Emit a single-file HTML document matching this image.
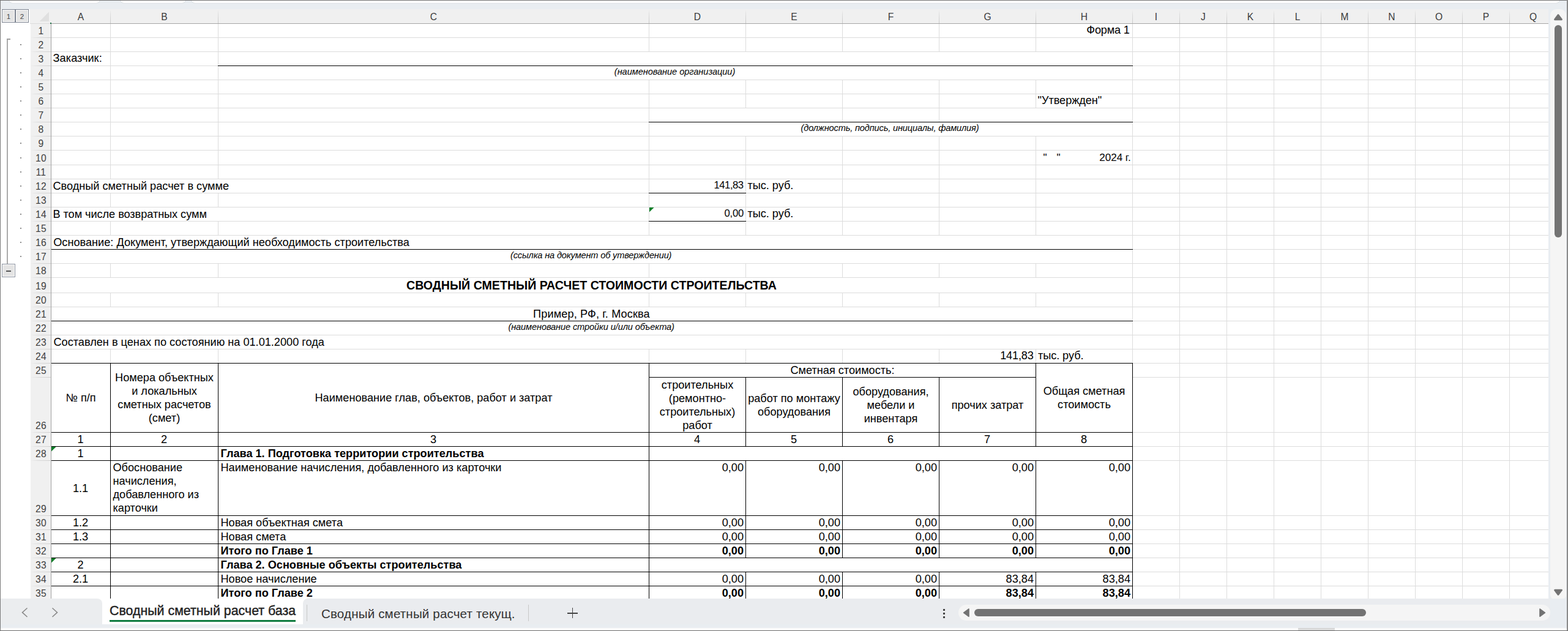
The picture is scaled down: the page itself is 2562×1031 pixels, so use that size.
<!DOCTYPE html>
<html lang="ru"><head><meta charset="utf-8"><title>Сводный сметный расчет</title>
<style>
html,body{margin:0;padding:0}
body{width:2562px;height:1031px;overflow:hidden;position:relative;background:#e9edf1;font-family:"Liberation Sans",sans-serif}
#app{position:absolute;left:0;top:0;width:2562px;height:1031px;overflow:hidden}
#app div,#app svg{position:absolute}
.t{white-space:nowrap}
.h{font-family:"Liberation Sans",sans-serif}
</style></head>
<body><div id="app">
<div style="left:0px;top:0px;width:2562px;height:15px;background:#e9edf1;"></div>
<div style="left:15px;top:-2px;width:148px;height:6.5px;background:#ffffff;border-radius:0 0 6px 6px;box-shadow:0 0 0 1px #dde1e5;"></div>
<div style="left:197px;top:-2px;width:106px;height:6.5px;background:#ffffff;border-radius:0 0 6px 6px;box-shadow:0 0 0 1px #dde1e5;"></div>
<div style="left:313px;top:-2px;width:2235px;height:6.5px;background:#ffffff;border-radius:0 0 6px 6px;box-shadow:0 0 0 1px #dde1e5;"></div>
<div style="left:1px;top:15px;width:2529px;height:963px;background:#ffffff;"></div>
<div style="left:49px;top:15px;width:2481px;height:23px;background:#f0f0f0;"></div>
<div style="left:50px;top:39px;width:33px;height:939px;background:#f0f0f0;"></div>
<svg style="left:64px;top:19px" width="17" height="17"><polygon points="16,0.3 16,16 0.6,16" fill="#e0e0e0"/></svg>
<div style="left:180px;top:39px;width:1px;height:939px;background:#dcdcdc;"></div>
<div style="left:180px;top:16px;width:1px;height:22px;background:linear-gradient(to bottom,#f0f0f0,#dcdcdc 35%,#c8c8c8);"></div>
<div style="left:356px;top:39px;width:1px;height:939px;background:#dcdcdc;"></div>
<div style="left:356px;top:16px;width:1px;height:22px;background:linear-gradient(to bottom,#f0f0f0,#dcdcdc 35%,#c8c8c8);"></div>
<div style="left:1060px;top:39px;width:1px;height:939px;background:#dcdcdc;"></div>
<div style="left:1060px;top:16px;width:1px;height:22px;background:linear-gradient(to bottom,#f0f0f0,#dcdcdc 35%,#c8c8c8);"></div>
<div style="left:1218px;top:39px;width:1px;height:939px;background:#dcdcdc;"></div>
<div style="left:1218px;top:16px;width:1px;height:22px;background:linear-gradient(to bottom,#f0f0f0,#dcdcdc 35%,#c8c8c8);"></div>
<div style="left:1376px;top:39px;width:1px;height:939px;background:#dcdcdc;"></div>
<div style="left:1376px;top:16px;width:1px;height:22px;background:linear-gradient(to bottom,#f0f0f0,#dcdcdc 35%,#c8c8c8);"></div>
<div style="left:1534px;top:39px;width:1px;height:939px;background:#dcdcdc;"></div>
<div style="left:1534px;top:16px;width:1px;height:22px;background:linear-gradient(to bottom,#f0f0f0,#dcdcdc 35%,#c8c8c8);"></div>
<div style="left:1692px;top:39px;width:1px;height:939px;background:#dcdcdc;"></div>
<div style="left:1692px;top:16px;width:1px;height:22px;background:linear-gradient(to bottom,#f0f0f0,#dcdcdc 35%,#c8c8c8);"></div>
<div style="left:1850px;top:39px;width:1px;height:939px;background:#dcdcdc;"></div>
<div style="left:1850px;top:16px;width:1px;height:22px;background:linear-gradient(to bottom,#f0f0f0,#dcdcdc 35%,#c8c8c8);"></div>
<div style="left:1927px;top:39px;width:1px;height:939px;background:#dcdcdc;"></div>
<div style="left:1927px;top:16px;width:1px;height:22px;background:linear-gradient(to bottom,#f0f0f0,#dcdcdc 35%,#c8c8c8);"></div>
<div style="left:2004px;top:39px;width:1px;height:939px;background:#dcdcdc;"></div>
<div style="left:2004px;top:16px;width:1px;height:22px;background:linear-gradient(to bottom,#f0f0f0,#dcdcdc 35%,#c8c8c8);"></div>
<div style="left:2081px;top:39px;width:1px;height:939px;background:#dcdcdc;"></div>
<div style="left:2081px;top:16px;width:1px;height:22px;background:linear-gradient(to bottom,#f0f0f0,#dcdcdc 35%,#c8c8c8);"></div>
<div style="left:2158px;top:39px;width:1px;height:939px;background:#dcdcdc;"></div>
<div style="left:2158px;top:16px;width:1px;height:22px;background:linear-gradient(to bottom,#f0f0f0,#dcdcdc 35%,#c8c8c8);"></div>
<div style="left:2235px;top:39px;width:1px;height:939px;background:#dcdcdc;"></div>
<div style="left:2235px;top:16px;width:1px;height:22px;background:linear-gradient(to bottom,#f0f0f0,#dcdcdc 35%,#c8c8c8);"></div>
<div style="left:2312px;top:39px;width:1px;height:939px;background:#dcdcdc;"></div>
<div style="left:2312px;top:16px;width:1px;height:22px;background:linear-gradient(to bottom,#f0f0f0,#dcdcdc 35%,#c8c8c8);"></div>
<div style="left:2389px;top:39px;width:1px;height:939px;background:#dcdcdc;"></div>
<div style="left:2389px;top:16px;width:1px;height:22px;background:linear-gradient(to bottom,#f0f0f0,#dcdcdc 35%,#c8c8c8);"></div>
<div style="left:2466px;top:39px;width:1px;height:939px;background:#dcdcdc;"></div>
<div style="left:2466px;top:16px;width:1px;height:22px;background:linear-gradient(to bottom,#f0f0f0,#dcdcdc 35%,#c8c8c8);"></div>
<div style="left:84px;top:61px;width:2446px;height:1px;background:#dcdcdc;"></div>
<div style="left:50px;top:61px;width:33px;height:1px;background:linear-gradient(to right,#f0f0f0,#dadada 40%,#cfcfcf);"></div>
<div style="left:84px;top:84px;width:2446px;height:1px;background:#dcdcdc;"></div>
<div style="left:50px;top:84px;width:33px;height:1px;background:linear-gradient(to right,#f0f0f0,#dadada 40%,#cfcfcf);"></div>
<div style="left:84px;top:107px;width:2446px;height:1px;background:#dcdcdc;"></div>
<div style="left:50px;top:107px;width:33px;height:1px;background:linear-gradient(to right,#f0f0f0,#dadada 40%,#cfcfcf);"></div>
<div style="left:84px;top:130px;width:2446px;height:1px;background:#dcdcdc;"></div>
<div style="left:50px;top:130px;width:33px;height:1px;background:linear-gradient(to right,#f0f0f0,#dadada 40%,#cfcfcf);"></div>
<div style="left:84px;top:153px;width:2446px;height:1px;background:#dcdcdc;"></div>
<div style="left:50px;top:153px;width:33px;height:1px;background:linear-gradient(to right,#f0f0f0,#dadada 40%,#cfcfcf);"></div>
<div style="left:84px;top:176px;width:2446px;height:1px;background:#dcdcdc;"></div>
<div style="left:50px;top:176px;width:33px;height:1px;background:linear-gradient(to right,#f0f0f0,#dadada 40%,#cfcfcf);"></div>
<div style="left:84px;top:199px;width:2446px;height:1px;background:#dcdcdc;"></div>
<div style="left:50px;top:199px;width:33px;height:1px;background:linear-gradient(to right,#f0f0f0,#dadada 40%,#cfcfcf);"></div>
<div style="left:84px;top:222px;width:2446px;height:1px;background:#dcdcdc;"></div>
<div style="left:50px;top:222px;width:33px;height:1px;background:linear-gradient(to right,#f0f0f0,#dadada 40%,#cfcfcf);"></div>
<div style="left:84px;top:245px;width:2446px;height:1px;background:#dcdcdc;"></div>
<div style="left:50px;top:245px;width:33px;height:1px;background:linear-gradient(to right,#f0f0f0,#dadada 40%,#cfcfcf);"></div>
<div style="left:84px;top:269px;width:2446px;height:1px;background:#dcdcdc;"></div>
<div style="left:50px;top:269px;width:33px;height:1px;background:linear-gradient(to right,#f0f0f0,#dadada 40%,#cfcfcf);"></div>
<div style="left:84px;top:292px;width:2446px;height:1px;background:#dcdcdc;"></div>
<div style="left:50px;top:292px;width:33px;height:1px;background:linear-gradient(to right,#f0f0f0,#dadada 40%,#cfcfcf);"></div>
<div style="left:84px;top:315px;width:2446px;height:1px;background:#dcdcdc;"></div>
<div style="left:50px;top:315px;width:33px;height:1px;background:linear-gradient(to right,#f0f0f0,#dadada 40%,#cfcfcf);"></div>
<div style="left:84px;top:338px;width:2446px;height:1px;background:#dcdcdc;"></div>
<div style="left:50px;top:338px;width:33px;height:1px;background:linear-gradient(to right,#f0f0f0,#dadada 40%,#cfcfcf);"></div>
<div style="left:84px;top:361px;width:2446px;height:1px;background:#dcdcdc;"></div>
<div style="left:50px;top:361px;width:33px;height:1px;background:linear-gradient(to right,#f0f0f0,#dadada 40%,#cfcfcf);"></div>
<div style="left:84px;top:384px;width:2446px;height:1px;background:#dcdcdc;"></div>
<div style="left:50px;top:384px;width:33px;height:1px;background:linear-gradient(to right,#f0f0f0,#dadada 40%,#cfcfcf);"></div>
<div style="left:84px;top:407px;width:2446px;height:1px;background:#dcdcdc;"></div>
<div style="left:50px;top:407px;width:33px;height:1px;background:linear-gradient(to right,#f0f0f0,#dadada 40%,#cfcfcf);"></div>
<div style="left:84px;top:430px;width:2446px;height:1px;background:#dcdcdc;"></div>
<div style="left:50px;top:430px;width:33px;height:1px;background:linear-gradient(to right,#f0f0f0,#dadada 40%,#cfcfcf);"></div>
<div style="left:84px;top:453px;width:2446px;height:1px;background:#dcdcdc;"></div>
<div style="left:50px;top:453px;width:33px;height:1px;background:linear-gradient(to right,#f0f0f0,#dadada 40%,#cfcfcf);"></div>
<div style="left:84px;top:478px;width:2446px;height:1px;background:#dcdcdc;"></div>
<div style="left:50px;top:478px;width:33px;height:1px;background:linear-gradient(to right,#f0f0f0,#dadada 40%,#cfcfcf);"></div>
<div style="left:84px;top:501px;width:2446px;height:1px;background:#dcdcdc;"></div>
<div style="left:50px;top:501px;width:33px;height:1px;background:linear-gradient(to right,#f0f0f0,#dadada 40%,#cfcfcf);"></div>
<div style="left:84px;top:524px;width:2446px;height:1px;background:#dcdcdc;"></div>
<div style="left:50px;top:524px;width:33px;height:1px;background:linear-gradient(to right,#f0f0f0,#dadada 40%,#cfcfcf);"></div>
<div style="left:84px;top:547px;width:2446px;height:1px;background:#dcdcdc;"></div>
<div style="left:50px;top:547px;width:33px;height:1px;background:linear-gradient(to right,#f0f0f0,#dadada 40%,#cfcfcf);"></div>
<div style="left:84px;top:570px;width:2446px;height:1px;background:#dcdcdc;"></div>
<div style="left:50px;top:570px;width:33px;height:1px;background:linear-gradient(to right,#f0f0f0,#dadada 40%,#cfcfcf);"></div>
<div style="left:84px;top:593px;width:2446px;height:1px;background:#dcdcdc;"></div>
<div style="left:50px;top:593px;width:33px;height:1px;background:linear-gradient(to right,#f0f0f0,#dadada 40%,#cfcfcf);"></div>
<div style="left:84px;top:616px;width:2446px;height:1px;background:#dcdcdc;"></div>
<div style="left:50px;top:616px;width:33px;height:1px;background:linear-gradient(to right,#f0f0f0,#dadada 40%,#cfcfcf);"></div>
<div style="left:84px;top:706px;width:2446px;height:1px;background:#dcdcdc;"></div>
<div style="left:50px;top:706px;width:33px;height:1px;background:linear-gradient(to right,#f0f0f0,#dadada 40%,#cfcfcf);"></div>
<div style="left:84px;top:729px;width:2446px;height:1px;background:#dcdcdc;"></div>
<div style="left:50px;top:729px;width:33px;height:1px;background:linear-gradient(to right,#f0f0f0,#dadada 40%,#cfcfcf);"></div>
<div style="left:84px;top:752px;width:2446px;height:1px;background:#dcdcdc;"></div>
<div style="left:50px;top:752px;width:33px;height:1px;background:linear-gradient(to right,#f0f0f0,#dadada 40%,#cfcfcf);"></div>
<div style="left:84px;top:842px;width:2446px;height:1px;background:#dcdcdc;"></div>
<div style="left:50px;top:842px;width:33px;height:1px;background:linear-gradient(to right,#f0f0f0,#dadada 40%,#cfcfcf);"></div>
<div style="left:84px;top:865px;width:2446px;height:1px;background:#dcdcdc;"></div>
<div style="left:50px;top:865px;width:33px;height:1px;background:linear-gradient(to right,#f0f0f0,#dadada 40%,#cfcfcf);"></div>
<div style="left:84px;top:888px;width:2446px;height:1px;background:#dcdcdc;"></div>
<div style="left:50px;top:888px;width:33px;height:1px;background:linear-gradient(to right,#f0f0f0,#dadada 40%,#cfcfcf);"></div>
<div style="left:84px;top:911px;width:2446px;height:1px;background:#dcdcdc;"></div>
<div style="left:50px;top:911px;width:33px;height:1px;background:linear-gradient(to right,#f0f0f0,#dadada 40%,#cfcfcf);"></div>
<div style="left:84px;top:934px;width:2446px;height:1px;background:#dcdcdc;"></div>
<div style="left:50px;top:934px;width:33px;height:1px;background:linear-gradient(to right,#f0f0f0,#dadada 40%,#cfcfcf);"></div>
<div style="left:84px;top:957px;width:2446px;height:1px;background:#dcdcdc;"></div>
<div style="left:50px;top:957px;width:33px;height:1px;background:linear-gradient(to right,#f0f0f0,#dadada 40%,#cfcfcf);"></div>
<div style="left:357px;top:85px;width:1493px;height:22px;background:#ffffff;"></div>
<div style="left:357px;top:108px;width:1493px;height:22px;background:#ffffff;"></div>
<div style="left:1061px;top:177px;width:315px;height:22px;background:#ffffff;"></div>
<div style="left:1535px;top:177px;width:315px;height:22px;background:#ffffff;"></div>
<div style="left:1061px;top:200px;width:789px;height:22px;background:#ffffff;"></div>
<div style="left:84px;top:293px;width:976px;height:22px;background:#ffffff;"></div>
<div style="left:84px;top:339px;width:976px;height:22px;background:#ffffff;"></div>
<div style="left:84px;top:385px;width:1766px;height:22px;background:#ffffff;"></div>
<div style="left:84px;top:408px;width:1766px;height:22px;background:#ffffff;"></div>
<div style="left:84px;top:454px;width:1766px;height:24px;background:#ffffff;"></div>
<div style="left:84px;top:502px;width:1766px;height:22px;background:#ffffff;"></div>
<div style="left:84px;top:525px;width:1766px;height:22px;background:#ffffff;"></div>
<div style="left:84px;top:548px;width:1766px;height:22px;background:#ffffff;"></div>
<div style="left:84px;top:594px;width:96px;height:112px;background:#ffffff;"></div>
<div style="left:181px;top:594px;width:175px;height:112px;background:#ffffff;"></div>
<div style="left:357px;top:594px;width:703px;height:112px;background:#ffffff;"></div>
<div style="left:1061px;top:594px;width:631px;height:22px;background:#ffffff;"></div>
<div style="left:1693px;top:594px;width:157px;height:112px;background:#ffffff;"></div>
<div style="left:1061px;top:730px;width:789px;height:22px;background:#ffffff;"></div>
<div style="left:1061px;top:912px;width:789px;height:22px;background:#ffffff;"></div>
<div style="left:356px;top:107px;width:1495px;height:1px;background:#000000;"></div>
<div style="left:1060px;top:199px;width:791px;height:1px;background:#000000;"></div>
<div style="left:1060px;top:315px;width:159px;height:1px;background:#000000;"></div>
<div style="left:1060px;top:361px;width:159px;height:1px;background:#000000;"></div>
<div style="left:84px;top:407px;width:1767px;height:1px;background:#000000;"></div>
<div style="left:84px;top:524px;width:1767px;height:1px;background:#000000;"></div>
<div style="left:84px;top:593px;width:1767px;height:1px;background:#000000;"></div>
<div style="left:84px;top:706px;width:1767px;height:1px;background:#000000;"></div>
<div style="left:84px;top:729px;width:1767px;height:1px;background:#000000;"></div>
<div style="left:84px;top:752px;width:1767px;height:1px;background:#000000;"></div>
<div style="left:84px;top:842px;width:1767px;height:1px;background:#000000;"></div>
<div style="left:84px;top:865px;width:1767px;height:1px;background:#000000;"></div>
<div style="left:84px;top:888px;width:1767px;height:1px;background:#000000;"></div>
<div style="left:84px;top:911px;width:1767px;height:1px;background:#000000;"></div>
<div style="left:84px;top:934px;width:1767px;height:1px;background:#000000;"></div>
<div style="left:84px;top:957px;width:1767px;height:1px;background:#000000;"></div>
<div style="left:1060px;top:616px;width:633px;height:1px;background:#000000;"></div>
<div style="left:180px;top:593px;width:1px;height:385px;background:#000000;"></div>
<div style="left:356px;top:593px;width:1px;height:385px;background:#000000;"></div>
<div style="left:1060px;top:593px;width:1px;height:385px;background:#000000;"></div>
<div style="left:1850px;top:593px;width:1px;height:385px;background:#000000;"></div>
<div style="left:1218px;top:616px;width:1px;height:114px;background:#000000;"></div>
<div style="left:1218px;top:752px;width:1px;height:160px;background:#000000;"></div>
<div style="left:1218px;top:934px;width:1px;height:44px;background:#000000;"></div>
<div style="left:1376px;top:616px;width:1px;height:114px;background:#000000;"></div>
<div style="left:1376px;top:752px;width:1px;height:160px;background:#000000;"></div>
<div style="left:1376px;top:934px;width:1px;height:44px;background:#000000;"></div>
<div style="left:1534px;top:616px;width:1px;height:114px;background:#000000;"></div>
<div style="left:1534px;top:752px;width:1px;height:160px;background:#000000;"></div>
<div style="left:1534px;top:934px;width:1px;height:44px;background:#000000;"></div>
<div style="left:1692px;top:593px;width:1px;height:137px;background:#000000;"></div>
<div style="left:1692px;top:752px;width:1px;height:160px;background:#000000;"></div>
<div style="left:1692px;top:934px;width:1px;height:44px;background:#000000;"></div>
<div style="left:49px;top:38px;width:35px;height:1px;background:#dcdcdc;"></div>
<div style="left:84px;top:38px;width:2446px;height:1px;background:#a6a6a6;"></div>
<div style="left:50px;top:978px;width:2481px;height:1px;background:#d9d9d9;"></div>
<div style="left:2530px;top:15px;width:1px;height:964px;background:#dfe2e5;"></div>
<div style="left:83px;top:38px;width:1px;height:940px;background:#a0a0a0;"></div>
<div style="left:82px;top:37px;width:2px;height:2px;background:#1e7145;"></div>
<svg style="left:1061px;top:339px" width="9" height="9"><polygon points="0,0 7.6,0 0,7.6" fill="#10802a"/></svg>
<svg style="left:84px;top:730px" width="9" height="9"><polygon points="0,0 7.6,0 0,7.6" fill="#10802a"/></svg>
<svg style="left:84px;top:912px" width="9" height="9"><polygon points="0,0 7.6,0 0,7.6" fill="#10802a"/></svg>
<div class="t h" id="t0" style="top:16.59px;font-size:15.6px;line-height:22px;color:#3b3b3b;left:-468.0px;width:1200px;text-align:center;">A</div>
<div class="t h" id="t1" style="top:16.59px;font-size:15.6px;line-height:22px;color:#3b3b3b;left:-331.5px;width:1200px;text-align:center;">B</div>
<div class="t h" id="t2" style="top:16.59px;font-size:15.6px;line-height:22px;color:#3b3b3b;left:108.5px;width:1200px;text-align:center;">C</div>
<div class="t h" id="t3" style="top:16.59px;font-size:15.6px;line-height:22px;color:#3b3b3b;left:539.5px;width:1200px;text-align:center;">D</div>
<div class="t h" id="t4" style="top:16.59px;font-size:15.6px;line-height:22px;color:#3b3b3b;left:697.5px;width:1200px;text-align:center;">E</div>
<div class="t h" id="t5" style="top:16.59px;font-size:15.6px;line-height:22px;color:#3b3b3b;left:855.5px;width:1200px;text-align:center;">F</div>
<div class="t h" id="t6" style="top:16.59px;font-size:15.6px;line-height:22px;color:#3b3b3b;left:1013.5px;width:1200px;text-align:center;">G</div>
<div class="t h" id="t7" style="top:16.59px;font-size:15.6px;line-height:22px;color:#3b3b3b;left:1171.5px;width:1200px;text-align:center;">H</div>
<div class="t h" id="t8" style="top:16.59px;font-size:15.6px;line-height:22px;color:#3b3b3b;left:1289.0px;width:1200px;text-align:center;">I</div>
<div class="t h" id="t9" style="top:16.59px;font-size:15.6px;line-height:22px;color:#3b3b3b;left:1366.0px;width:1200px;text-align:center;">J</div>
<div class="t h" id="t10" style="top:16.59px;font-size:15.6px;line-height:22px;color:#3b3b3b;left:1443.0px;width:1200px;text-align:center;">K</div>
<div class="t h" id="t11" style="top:16.59px;font-size:15.6px;line-height:22px;color:#3b3b3b;left:1520.0px;width:1200px;text-align:center;">L</div>
<div class="t h" id="t12" style="top:16.59px;font-size:15.6px;line-height:22px;color:#3b3b3b;left:1597.0px;width:1200px;text-align:center;">M</div>
<div class="t h" id="t13" style="top:16.59px;font-size:15.6px;line-height:22px;color:#3b3b3b;left:1674.0px;width:1200px;text-align:center;">N</div>
<div class="t h" id="t14" style="top:16.59px;font-size:15.6px;line-height:22px;color:#3b3b3b;left:1751.0px;width:1200px;text-align:center;">O</div>
<div class="t h" id="t15" style="top:16.59px;font-size:15.6px;line-height:22px;color:#3b3b3b;left:1828.0px;width:1200px;text-align:center;">P</div>
<div class="t h" id="t16" style="top:16.59px;font-size:15.6px;line-height:22px;color:#3b3b3b;left:1905.0px;width:1200px;text-align:center;">Q</div>
<div class="t h" id="t17" style="top:39.59px;font-size:15.6px;line-height:22px;color:#404040;left:-533.2px;width:1200px;text-align:center;letter-spacing:0.2px;text-indent:0.2px;">1</div>
<div class="t h" id="t18" style="top:62.59px;font-size:15.6px;line-height:22px;color:#404040;left:-533.2px;width:1200px;text-align:center;letter-spacing:0.2px;text-indent:0.2px;">2</div>
<div class="t h" id="t19" style="top:85.59px;font-size:15.6px;line-height:22px;color:#404040;left:-533.2px;width:1200px;text-align:center;letter-spacing:0.2px;text-indent:0.2px;">3</div>
<div class="t h" id="t20" style="top:108.59px;font-size:15.6px;line-height:22px;color:#404040;left:-533.2px;width:1200px;text-align:center;letter-spacing:0.2px;text-indent:0.2px;">4</div>
<div class="t h" id="t21" style="top:131.59px;font-size:15.6px;line-height:22px;color:#404040;left:-533.2px;width:1200px;text-align:center;letter-spacing:0.2px;text-indent:0.2px;">5</div>
<div class="t h" id="t22" style="top:154.59px;font-size:15.6px;line-height:22px;color:#404040;left:-533.2px;width:1200px;text-align:center;letter-spacing:0.2px;text-indent:0.2px;">6</div>
<div class="t h" id="t23" style="top:177.59px;font-size:15.6px;line-height:22px;color:#404040;left:-533.2px;width:1200px;text-align:center;letter-spacing:0.2px;text-indent:0.2px;">7</div>
<div class="t h" id="t24" style="top:200.59px;font-size:15.6px;line-height:22px;color:#404040;left:-533.2px;width:1200px;text-align:center;letter-spacing:0.2px;text-indent:0.2px;">8</div>
<div class="t h" id="t25" style="top:223.59px;font-size:15.6px;line-height:22px;color:#404040;left:-533.2px;width:1200px;text-align:center;letter-spacing:0.2px;text-indent:0.2px;">9</div>
<div class="t h" id="t26" style="top:247.59px;font-size:15.6px;line-height:22px;color:#404040;left:-533.2px;width:1200px;text-align:center;letter-spacing:0.2px;text-indent:0.2px;">10</div>
<div class="t h" id="t27" style="top:270.59px;font-size:15.6px;line-height:22px;color:#404040;left:-533.2px;width:1200px;text-align:center;letter-spacing:0.2px;text-indent:0.2px;">11</div>
<div class="t h" id="t28" style="top:293.59px;font-size:15.6px;line-height:22px;color:#404040;left:-533.2px;width:1200px;text-align:center;letter-spacing:0.2px;text-indent:0.2px;">12</div>
<div class="t h" id="t29" style="top:316.59px;font-size:15.6px;line-height:22px;color:#404040;left:-533.2px;width:1200px;text-align:center;letter-spacing:0.2px;text-indent:0.2px;">13</div>
<div class="t h" id="t30" style="top:339.59px;font-size:15.6px;line-height:22px;color:#404040;left:-533.2px;width:1200px;text-align:center;letter-spacing:0.2px;text-indent:0.2px;">14</div>
<div class="t h" id="t31" style="top:362.59px;font-size:15.6px;line-height:22px;color:#404040;left:-533.2px;width:1200px;text-align:center;letter-spacing:0.2px;text-indent:0.2px;">15</div>
<div class="t h" id="t32" style="top:385.59px;font-size:15.6px;line-height:22px;color:#404040;left:-533.2px;width:1200px;text-align:center;letter-spacing:0.2px;text-indent:0.2px;">16</div>
<div class="t h" id="t33" style="top:408.59px;font-size:15.6px;line-height:22px;color:#404040;left:-533.2px;width:1200px;text-align:center;letter-spacing:0.2px;text-indent:0.2px;">17</div>
<div class="t h" id="t34" style="top:431.59px;font-size:15.6px;line-height:22px;color:#404040;left:-533.2px;width:1200px;text-align:center;letter-spacing:0.2px;text-indent:0.2px;">18</div>
<div class="t h" id="t35" style="top:456.59px;font-size:15.6px;line-height:22px;color:#404040;left:-533.2px;width:1200px;text-align:center;letter-spacing:0.2px;text-indent:0.2px;">19</div>
<div class="t h" id="t36" style="top:479.59px;font-size:15.6px;line-height:22px;color:#404040;left:-533.2px;width:1200px;text-align:center;letter-spacing:0.2px;text-indent:0.2px;">20</div>
<div class="t h" id="t37" style="top:502.59px;font-size:15.6px;line-height:22px;color:#404040;left:-533.2px;width:1200px;text-align:center;letter-spacing:0.2px;text-indent:0.2px;">21</div>
<div class="t h" id="t38" style="top:525.59px;font-size:15.6px;line-height:22px;color:#404040;left:-533.2px;width:1200px;text-align:center;letter-spacing:0.2px;text-indent:0.2px;">22</div>
<div class="t h" id="t39" style="top:548.59px;font-size:15.6px;line-height:22px;color:#404040;left:-533.2px;width:1200px;text-align:center;letter-spacing:0.2px;text-indent:0.2px;">23</div>
<div class="t h" id="t40" style="top:571.59px;font-size:15.6px;line-height:22px;color:#404040;left:-533.2px;width:1200px;text-align:center;letter-spacing:0.2px;text-indent:0.2px;">24</div>
<div class="t h" id="t41" style="top:594.59px;font-size:15.6px;line-height:22px;color:#404040;left:-533.2px;width:1200px;text-align:center;letter-spacing:0.2px;text-indent:0.2px;">25</div>
<div class="t h" id="t42" style="top:684.59px;font-size:15.6px;line-height:22px;color:#404040;left:-533.2px;width:1200px;text-align:center;letter-spacing:0.2px;text-indent:0.2px;">26</div>
<div class="t h" id="t43" style="top:707.59px;font-size:15.6px;line-height:22px;color:#404040;left:-533.2px;width:1200px;text-align:center;letter-spacing:0.2px;text-indent:0.2px;">27</div>
<div class="t h" id="t44" style="top:730.59px;font-size:15.6px;line-height:22px;color:#404040;left:-533.2px;width:1200px;text-align:center;letter-spacing:0.2px;text-indent:0.2px;">28</div>
<div class="t h" id="t45" style="top:820.59px;font-size:15.6px;line-height:22px;color:#404040;left:-533.2px;width:1200px;text-align:center;letter-spacing:0.2px;text-indent:0.2px;">29</div>
<div class="t h" id="t46" style="top:843.59px;font-size:15.6px;line-height:22px;color:#404040;left:-533.2px;width:1200px;text-align:center;letter-spacing:0.2px;text-indent:0.2px;">30</div>
<div class="t h" id="t47" style="top:866.59px;font-size:15.6px;line-height:22px;color:#404040;left:-533.2px;width:1200px;text-align:center;letter-spacing:0.2px;text-indent:0.2px;">31</div>
<div class="t h" id="t48" style="top:889.59px;font-size:15.6px;line-height:22px;color:#404040;left:-533.2px;width:1200px;text-align:center;letter-spacing:0.2px;text-indent:0.2px;">32</div>
<div class="t h" id="t49" style="top:912.59px;font-size:15.6px;line-height:22px;color:#404040;left:-533.2px;width:1200px;text-align:center;letter-spacing:0.2px;text-indent:0.2px;">33</div>
<div class="t h" id="t50" style="top:935.59px;font-size:15.6px;line-height:22px;color:#404040;left:-533.2px;width:1200px;text-align:center;letter-spacing:0.2px;text-indent:0.2px;">34</div>
<div class="t h" id="t51" style="top:958.59px;font-size:15.6px;line-height:22px;color:#404040;left:-533.2px;width:1200px;text-align:center;letter-spacing:0.2px;text-indent:0.2px;">35</div>
<div class="t" id="t52" style="top:37.71px;font-size:18.15px;line-height:22px;color:#000;left:1775.37px;letter-spacing:-0.198px;">Форма 1</div>
<div class="t" id="t53" style="top:83.71px;font-size:18.15px;line-height:22px;color:#000;left:86.54px;letter-spacing:0.075px;">Заказчик:</div>
<div class="t" id="t54" style="top:105.94px;font-size:14.6px;line-height:22px;color:#000;font-style:italic;left:1003.85px;letter-spacing:-0.056px;">(наименование организации)</div>
<div class="t" id="t55" style="top:152.71px;font-size:18.15px;line-height:22px;color:#000;left:1695.54px;letter-spacing:-0.040px;">"Утвержден"</div>
<div class="t" id="t56" style="top:197.94px;font-size:14.6px;line-height:22px;color:#000;font-style:italic;left:1308.53px;letter-spacing:-0.158px;">(должность, подпись, инициалы, фамилия)</div>
<div class="t" id="t57" style="top:247.11px;font-size:17px;line-height:22px;color:#000;left:1704.4px;">"</div>
<div class="t" id="t58" style="top:247.11px;font-size:17px;line-height:22px;color:#000;left:1726.5px;">"</div>
<div class="t" id="t59" style="top:247.11px;font-size:17px;line-height:22px;color:#000;left:1796.30px;letter-spacing:0.000px;">2024 г.</div>
<div class="t" id="t60" style="top:292.71px;font-size:18.15px;line-height:22px;color:#000;left:86.50px;letter-spacing:0.000px;">Сводный сметный расчет в сумме</div>
<div class="t" id="t61" style="top:292.22px;font-size:16.67px;line-height:22px;color:#000;left:1166.56px;letter-spacing:-0.480px;">141,83</div>
<div class="t" id="t62" style="top:291.71px;font-size:18.15px;line-height:22px;color:#000;left:1221.50px;letter-spacing:-0.025px;">тыс. руб.</div>
<div class="t" id="t63" style="top:338.71px;font-size:18.15px;line-height:22px;color:#000;left:86.50px;letter-spacing:-0.049px;">В том числе возвратных сумм</div>
<div class="t" id="t64" style="top:338.22px;font-size:16.67px;line-height:22px;color:#000;left:1183.58px;letter-spacing:-0.264px;">0,00</div>
<div class="t" id="t65" style="top:337.71px;font-size:18.15px;line-height:22px;color:#000;left:1221.50px;letter-spacing:-0.025px;">тыс. руб.</div>
<div class="t" id="t66" style="top:384.71px;font-size:18.15px;line-height:22px;color:#000;left:87.19px;letter-spacing:0.007px;">Основание: Документ, утверждающий необходимость строительства</div>
<div class="t" id="t67" style="top:405.94px;font-size:14.6px;line-height:22px;color:#000;font-style:italic;left:834.02px;letter-spacing:-0.162px;">(ссылка на документ об утверждении)</div>
<div class="t" id="t68" style="top:455.21px;font-size:19.6px;line-height:22px;color:#000;font-weight:bold;left:664.02px;letter-spacing:-0.000px;">СВОДНЫЙ СМЕТНЫЙ РАСЧЕТ СТОИМОСТИ СТРОИТЕЛЬСТВА</div>
<div class="t" id="t69" style="top:501.71px;font-size:18.15px;line-height:22px;color:#000;left:871.10px;letter-spacing:0.120px;">Пример, РФ, г. Москва</div>
<div class="t" id="t70" style="top:522.94px;font-size:14.6px;line-height:22px;color:#000;font-style:italic;left:830.41px;letter-spacing:-0.115px;">(наименование стройки и/или объекта)</div>
<div class="t" id="t71" style="top:547.71px;font-size:18.15px;line-height:22px;color:#000;left:87.5px;">Составлен в ценах по состоянию на 01.01.2000 года</div>
<div class="t" id="t72" style="top:569.71px;font-size:18.15px;line-height:22px;color:#000;left:1634.19px;letter-spacing:-0.160px;">141,83</div>
<div class="t" id="t73" style="top:569.71px;font-size:18.15px;line-height:22px;color:#000;left:1696.00px;letter-spacing:-0.075px;">тыс. руб.</div>
<div class="t" id="t74" style="top:639.06px;font-size:18.15px;line-height:22px;color:#000;left:-468.0px;width:1200px;text-align:center;">№ п/п</div>
<div class="t" id="t75" style="top:606.06px;font-size:18.15px;line-height:22px;color:#000;left:-331.5px;width:1200px;text-align:center;">Номера объектных</div>
<div class="t" id="t76" style="top:628.06px;font-size:18.15px;line-height:22px;color:#000;left:-331.5px;width:1200px;text-align:center;">и локальных</div>
<div class="t" id="t77" style="top:650.06px;font-size:18.15px;line-height:22px;color:#000;left:-331.5px;width:1200px;text-align:center;">сметных расчетов</div>
<div class="t" id="t78" style="top:672.06px;font-size:18.15px;line-height:22px;color:#000;left:-331.5px;width:1200px;text-align:center;">(смет)</div>
<div class="t" id="t79" style="top:639.06px;font-size:18.15px;line-height:22px;color:#000;left:108.5px;width:1200px;text-align:center;">Наименование глав, объектов, работ и затрат</div>
<div class="t" id="t80" style="top:593.71px;font-size:18.15px;line-height:22px;color:#000;left:776.5px;width:1200px;text-align:center;">Сметная стоимость:</div>
<div class="t" id="t81" style="top:617.56px;font-size:18.15px;line-height:22px;color:#000;left:539.5px;width:1200px;text-align:center;">строительных</div>
<div class="t" id="t82" style="top:639.56px;font-size:18.15px;line-height:22px;color:#000;left:539.5px;width:1200px;text-align:center;">(ремонтно-</div>
<div class="t" id="t83" style="top:661.56px;font-size:18.15px;line-height:22px;color:#000;left:539.5px;width:1200px;text-align:center;">строительных)</div>
<div class="t" id="t84" style="top:683.56px;font-size:18.15px;line-height:22px;color:#000;left:539.5px;width:1200px;text-align:center;">работ</div>
<div class="t" id="t85" style="top:639.56px;font-size:18.15px;line-height:22px;color:#000;left:697.5px;width:1200px;text-align:center;">работ по монтажу</div>
<div class="t" id="t86" style="top:661.56px;font-size:18.15px;line-height:22px;color:#000;left:697.5px;width:1200px;text-align:center;">оборудования</div>
<div class="t" id="t87" style="top:628.56px;font-size:18.15px;line-height:22px;color:#000;left:855.5px;width:1200px;text-align:center;">оборудования,</div>
<div class="t" id="t88" style="top:650.56px;font-size:18.15px;line-height:22px;color:#000;left:855.5px;width:1200px;text-align:center;">мебели и</div>
<div class="t" id="t89" style="top:672.56px;font-size:18.15px;line-height:22px;color:#000;left:855.5px;width:1200px;text-align:center;">инвентаря</div>
<div class="t" id="t90" style="top:650.56px;font-size:18.15px;line-height:22px;color:#000;left:1013.5px;width:1200px;text-align:center;">прочих затрат</div>
<div class="t" id="t91" style="top:628.06px;font-size:18.15px;line-height:22px;color:#000;left:1171.5px;width:1200px;text-align:center;">Общая сметная</div>
<div class="t" id="t92" style="top:650.06px;font-size:18.15px;line-height:22px;color:#000;left:1171.5px;width:1200px;text-align:center;">стоимость</div>
<div class="t" id="t93" style="top:706.71px;font-size:18.15px;line-height:22px;color:#000;left:-468.5px;width:1200px;text-align:center;">1</div>
<div class="t" id="t94" style="top:706.71px;font-size:18.15px;line-height:22px;color:#000;left:-332.0px;width:1200px;text-align:center;">2</div>
<div class="t" id="t95" style="top:706.71px;font-size:18.15px;line-height:22px;color:#000;left:108.0px;width:1200px;text-align:center;">3</div>
<div class="t" id="t96" style="top:706.71px;font-size:18.15px;line-height:22px;color:#000;left:539.0px;width:1200px;text-align:center;">4</div>
<div class="t" id="t97" style="top:706.71px;font-size:18.15px;line-height:22px;color:#000;left:697.0px;width:1200px;text-align:center;">5</div>
<div class="t" id="t98" style="top:706.71px;font-size:18.15px;line-height:22px;color:#000;left:855.0px;width:1200px;text-align:center;">6</div>
<div class="t" id="t99" style="top:706.71px;font-size:18.15px;line-height:22px;color:#000;left:1013.0px;width:1200px;text-align:center;">7</div>
<div class="t" id="t100" style="top:706.71px;font-size:18.15px;line-height:22px;color:#000;left:1171.0px;width:1200px;text-align:center;">8</div>
<div class="t" id="t101" style="top:729.71px;font-size:18.15px;line-height:22px;color:#000;left:-468.5px;width:1200px;text-align:center;">1</div>
<div class="t" id="t102" style="top:729.71px;font-size:18.15px;line-height:22px;color:#000;font-weight:bold;left:360.5px;">Глава 1. Подготовка территории строительства</div>
<div class="t" id="t103" style="top:786.71px;font-size:18.15px;line-height:22px;color:#000;left:-468.5px;width:1200px;text-align:center;">1.1</div>
<div class="t" id="t104" style="top:753.06px;font-size:18.15px;line-height:22px;color:#000;left:360.5px;">Наименование начисления, добавленного из карточки</div>
<div class="t" id="t105" style="top:753.06px;font-size:18.15px;line-height:22px;color:#000;right:1347px;text-align:right;">0,00</div>
<div class="t" id="t106" style="top:753.06px;font-size:18.15px;line-height:22px;color:#000;right:1189px;text-align:right;">0,00</div>
<div class="t" id="t107" style="top:753.06px;font-size:18.15px;line-height:22px;color:#000;right:1031px;text-align:right;">0,00</div>
<div class="t" id="t108" style="top:753.06px;font-size:18.15px;line-height:22px;color:#000;right:873px;text-align:right;">0,00</div>
<div class="t" id="t109" style="top:753.06px;font-size:18.15px;line-height:22px;color:#000;right:715px;text-align:right;">0,00</div>
<div class="t" id="t110" style="top:753.06px;font-size:18.15px;line-height:22px;color:#000;left:184.5px;">Обоснование</div>
<div class="t" id="t111" style="top:775.06px;font-size:18.15px;line-height:22px;color:#000;left:184.5px;">начисления,</div>
<div class="t" id="t112" style="top:797.06px;font-size:18.15px;line-height:22px;color:#000;left:184.5px;">добавленного из</div>
<div class="t" id="t113" style="top:819.06px;font-size:18.15px;line-height:22px;color:#000;left:184.5px;">карточки</div>
<div class="t" id="t114" style="top:842.71px;font-size:18.15px;line-height:22px;color:#000;left:-468.5px;width:1200px;text-align:center;">1.2</div>
<div class="t" id="t115" style="top:842.71px;font-size:18.15px;line-height:22px;color:#000;left:360.5px;">Новая объектная смета</div>
<div class="t" id="t116" style="top:842.71px;font-size:18.15px;line-height:22px;color:#000;right:1347px;text-align:right;">0,00</div>
<div class="t" id="t117" style="top:842.71px;font-size:18.15px;line-height:22px;color:#000;right:1189px;text-align:right;">0,00</div>
<div class="t" id="t118" style="top:842.71px;font-size:18.15px;line-height:22px;color:#000;right:1031px;text-align:right;">0,00</div>
<div class="t" id="t119" style="top:842.71px;font-size:18.15px;line-height:22px;color:#000;right:873px;text-align:right;">0,00</div>
<div class="t" id="t120" style="top:842.71px;font-size:18.15px;line-height:22px;color:#000;right:715px;text-align:right;">0,00</div>
<div class="t" id="t121" style="top:865.71px;font-size:18.15px;line-height:22px;color:#000;left:-468.5px;width:1200px;text-align:center;">1.3</div>
<div class="t" id="t122" style="top:865.71px;font-size:18.15px;line-height:22px;color:#000;left:360.5px;">Новая смета</div>
<div class="t" id="t123" style="top:865.71px;font-size:18.15px;line-height:22px;color:#000;right:1347px;text-align:right;">0,00</div>
<div class="t" id="t124" style="top:865.71px;font-size:18.15px;line-height:22px;color:#000;right:1189px;text-align:right;">0,00</div>
<div class="t" id="t125" style="top:865.71px;font-size:18.15px;line-height:22px;color:#000;right:1031px;text-align:right;">0,00</div>
<div class="t" id="t126" style="top:865.71px;font-size:18.15px;line-height:22px;color:#000;right:873px;text-align:right;">0,00</div>
<div class="t" id="t127" style="top:865.71px;font-size:18.15px;line-height:22px;color:#000;right:715px;text-align:right;">0,00</div>
<div class="t" id="t128" style="top:888.71px;font-size:18.15px;line-height:22px;color:#000;font-weight:bold;left:360.5px;">Итого по Главе 1</div>
<div class="t" id="t129" style="top:888.71px;font-size:18.15px;line-height:22px;color:#000;font-weight:bold;right:1347px;text-align:right;">0,00</div>
<div class="t" id="t130" style="top:888.71px;font-size:18.15px;line-height:22px;color:#000;font-weight:bold;right:1189px;text-align:right;">0,00</div>
<div class="t" id="t131" style="top:888.71px;font-size:18.15px;line-height:22px;color:#000;font-weight:bold;right:1031px;text-align:right;">0,00</div>
<div class="t" id="t132" style="top:888.71px;font-size:18.15px;line-height:22px;color:#000;font-weight:bold;right:873px;text-align:right;">0,00</div>
<div class="t" id="t133" style="top:888.71px;font-size:18.15px;line-height:22px;color:#000;font-weight:bold;right:715px;text-align:right;">0,00</div>
<div class="t" id="t134" style="top:911.71px;font-size:18.15px;line-height:22px;color:#000;left:-468.5px;width:1200px;text-align:center;">2</div>
<div class="t" id="t135" style="top:911.71px;font-size:18.15px;line-height:22px;color:#000;font-weight:bold;left:360.5px;">Глава 2. Основные объекты строительства</div>
<div class="t" id="t136" style="top:934.71px;font-size:18.15px;line-height:22px;color:#000;left:-468.5px;width:1200px;text-align:center;">2.1</div>
<div class="t" id="t137" style="top:934.71px;font-size:18.15px;line-height:22px;color:#000;left:360.5px;">Новое начисление</div>
<div class="t" id="t138" style="top:934.71px;font-size:18.15px;line-height:22px;color:#000;right:1347px;text-align:right;">0,00</div>
<div class="t" id="t139" style="top:934.71px;font-size:18.15px;line-height:22px;color:#000;right:1189px;text-align:right;">0,00</div>
<div class="t" id="t140" style="top:934.71px;font-size:18.15px;line-height:22px;color:#000;right:1031px;text-align:right;">0,00</div>
<div class="t" id="t141" style="top:934.71px;font-size:18.15px;line-height:22px;color:#000;right:873px;text-align:right;">83,84</div>
<div class="t" id="t142" style="top:934.71px;font-size:18.15px;line-height:22px;color:#000;right:715px;text-align:right;">83,84</div>
<div class="t" id="t143" style="top:957.71px;font-size:18.15px;line-height:22px;color:#000;font-weight:bold;left:360.5px;">Итого по Главе 2</div>
<div class="t" id="t144" style="top:957.71px;font-size:18.15px;line-height:22px;color:#000;font-weight:bold;right:1347px;text-align:right;">0,00</div>
<div class="t" id="t145" style="top:957.71px;font-size:18.15px;line-height:22px;color:#000;font-weight:bold;right:1189px;text-align:right;">0,00</div>
<div class="t" id="t146" style="top:957.71px;font-size:18.15px;line-height:22px;color:#000;font-weight:bold;right:1031px;text-align:right;">0,00</div>
<div class="t" id="t147" style="top:957.71px;font-size:18.15px;line-height:22px;color:#000;font-weight:bold;right:873px;text-align:right;">83,84</div>
<div class="t" id="t148" style="top:957.71px;font-size:18.15px;line-height:22px;color:#000;font-weight:bold;right:715px;text-align:right;">83,84</div>
<div style="left:3px;top:15px;width:22px;height:22px;background:#e4e4e4;box-sizing:border-box;border:1px solid #7a818e;box-shadow:inset 0 0 0 1px #fff;"></div>
<div class="t" id="t149" style="top:16.02px;font-size:11.5px;line-height:22px;color:#444;left:-586px;width:1200px;text-align:center;">1</div>
<div style="left:25px;top:15px;width:22px;height:22px;background:#e4e4e4;box-sizing:border-box;border:1px solid #7a818e;box-shadow:inset 0 0 0 1px #fff;"></div>
<div class="t" id="t150" style="top:16.02px;font-size:11.5px;line-height:22px;color:#444;left:-564px;width:1200px;text-align:center;">2</div>
<div style="left:11px;top:63px;width:2px;height:368px;background:#ababab;"></div>
<div style="left:11px;top:63px;width:6px;height:2px;background:#a0a0a0;"></div>
<div style="left:33px;top:72px;width:2px;height:2px;background:#909090;"></div>
<div style="left:33px;top:95px;width:2px;height:2px;background:#909090;"></div>
<div style="left:33px;top:118px;width:2px;height:2px;background:#909090;"></div>
<div style="left:33px;top:141px;width:2px;height:2px;background:#909090;"></div>
<div style="left:33px;top:164px;width:2px;height:2px;background:#909090;"></div>
<div style="left:33px;top:187px;width:2px;height:2px;background:#909090;"></div>
<div style="left:33px;top:210px;width:2px;height:2px;background:#909090;"></div>
<div style="left:33px;top:233px;width:2px;height:2px;background:#909090;"></div>
<div style="left:33px;top:257px;width:2px;height:2px;background:#909090;"></div>
<div style="left:33px;top:280px;width:2px;height:2px;background:#909090;"></div>
<div style="left:33px;top:303px;width:2px;height:2px;background:#909090;"></div>
<div style="left:33px;top:326px;width:2px;height:2px;background:#909090;"></div>
<div style="left:33px;top:349px;width:2px;height:2px;background:#909090;"></div>
<div style="left:33px;top:372px;width:2px;height:2px;background:#909090;"></div>
<div style="left:33px;top:395px;width:2px;height:2px;background:#909090;"></div>
<div style="left:33px;top:418px;width:2px;height:2px;background:#909090;"></div>
<div style="left:3px;top:431px;width:22px;height:22px;background:#e4e4e4;box-sizing:border-box;border:1px solid #8d94a0;box-shadow:inset 0 0 0 1px #fff;"></div>
<div style="left:10px;top:442px;width:8px;height:2px;background:#555;"></div>
<div style="left:2530px;top:15px;width:32px;height:973px;background:#e9edf1;"></div>
<div style="left:2533px;top:15px;width:26px;height:966px;background:#f5f5f5;border-radius:10px;"></div>
<svg style="left:2538px;top:22px" width="16" height="12"><path d="M8 2.6 L13.4 9.8 L2.6 9.8 Z" fill="#737373" stroke="#737373" stroke-width="3" stroke-linejoin="round"/></svg>
<svg style="left:2538px;top:962px" width="16" height="12"><path d="M8 9.4 L13.4 2.2 L2.6 2.2 Z" fill="#737373" stroke="#737373" stroke-width="3" stroke-linejoin="round"/></svg>
<div style="left:2540px;top:41px;width:12px;height:347px;background:#737373;border-radius:6px;"></div>
<div style="left:0px;top:978px;width:2562px;height:53px;background:#e9edf1;"></div>
<div style="left:1px;top:978px;width:2532px;height:48px;background:#e9edf1;"></div>
<div style="left:150px;top:978px;width:360px;height:42px;background:#ffffff;border-radius:0 0 6px 6px;"></div>
<div style="left:1px;top:978px;width:166px;height:48px;background:#ebedef;border-radius:0 8px 0 0;"></div>
<div style="left:495px;top:978px;width:2038px;height:42px;background:#eaecef;border-radius:8px 0 0 0;"></div>
<div style="left:1px;top:1020px;width:2540px;height:6px;background:#e9edf1;"></div>
<div style="left:167px;top:1014px;width:328px;height:6px;background:#ffffff;border-radius:0 0 6px 6px;"></div>
<div style="left:179px;top:1013px;width:304px;height:3px;background:#107c41;"></div>
<div class="t" id="t151" style="top:985.12px;font-size:21.3px;line-height:26px;color:#242424;left:179.04px;letter-spacing:0.038px;-webkit-text-stroke:0.45px #242424;">Сводный сметный расчет база</div>
<div class="t" id="t152" style="top:989.86px;font-size:20.6px;line-height:26px;color:#333;left:525.00px;letter-spacing:0.143px;">Сводный сметный расчет текущ.</div>
<div style="left:501px;top:988px;width:1px;height:27px;background:#c8c8c8;"></div>
<div style="left:863px;top:988px;width:1px;height:27px;background:#c8c8c8;"></div>
<svg style="left:33px;top:991px" width="16" height="20"><path d="M11.5 2.5 L3.5 9.7 L11.5 17" fill="none" stroke="#8a8a8a" stroke-width="1.6"/></svg>
<svg style="left:81px;top:991px" width="16" height="20"><path d="M4.5 2.5 L12.5 9.7 L4.5 17" fill="none" stroke="#8a8a8a" stroke-width="1.6"/></svg>
<div style="left:927px;top:1001px;width:17px;height:1.6px;background:#444;"></div>
<div style="left:934.7px;top:993px;width:1.6px;height:17px;background:#444;"></div>
<div style="left:1540.5px;top:995px;width:3px;height:3px;background:#444;"></div>
<div style="left:1540.5px;top:1001px;width:3px;height:3px;background:#444;"></div>
<div style="left:1540.5px;top:1007px;width:3px;height:3px;background:#444;"></div>
<div style="left:1566px;top:988px;width:967px;height:26px;background:#f5f5f5;border-radius:13px;"></div>
<svg style="left:1572px;top:993px" width="14" height="16"><path d="M11 2 L11 14.3 L2.6 8.2 Z" fill="#737373" stroke="#737373" stroke-width="1.6" stroke-linejoin="round"/></svg>
<svg style="left:2513px;top:993px" width="14" height="16"><path d="M3 2 L3 14.3 L11.4 8.2 Z" fill="#737373" stroke="#737373" stroke-width="1.6" stroke-linejoin="round"/></svg>
<div style="left:1592px;top:995px;width:640px;height:12px;background:#737373;border-radius:6px;"></div>
<div style="left:1px;top:1026px;width:2559px;height:4px;background:#fdfdfd;"></div>
<div style="left:2121px;top:1026px;width:60px;height:4px;background:#d9d9d9;"></div>
<div style="left:0px;top:0px;width:1px;height:1031px;background:#7a7a7a;"></div>
<div style="left:0px;top:0px;width:2562px;height:1px;background:#707070;"></div>
<div style="left:2560px;top:0px;width:2px;height:1031px;background:#8a8a8a;"></div>
<div style="left:0px;top:1029.5px;width:2562px;height:1.5px;background:#6a6a6a;"></div>
</div></body></html>
